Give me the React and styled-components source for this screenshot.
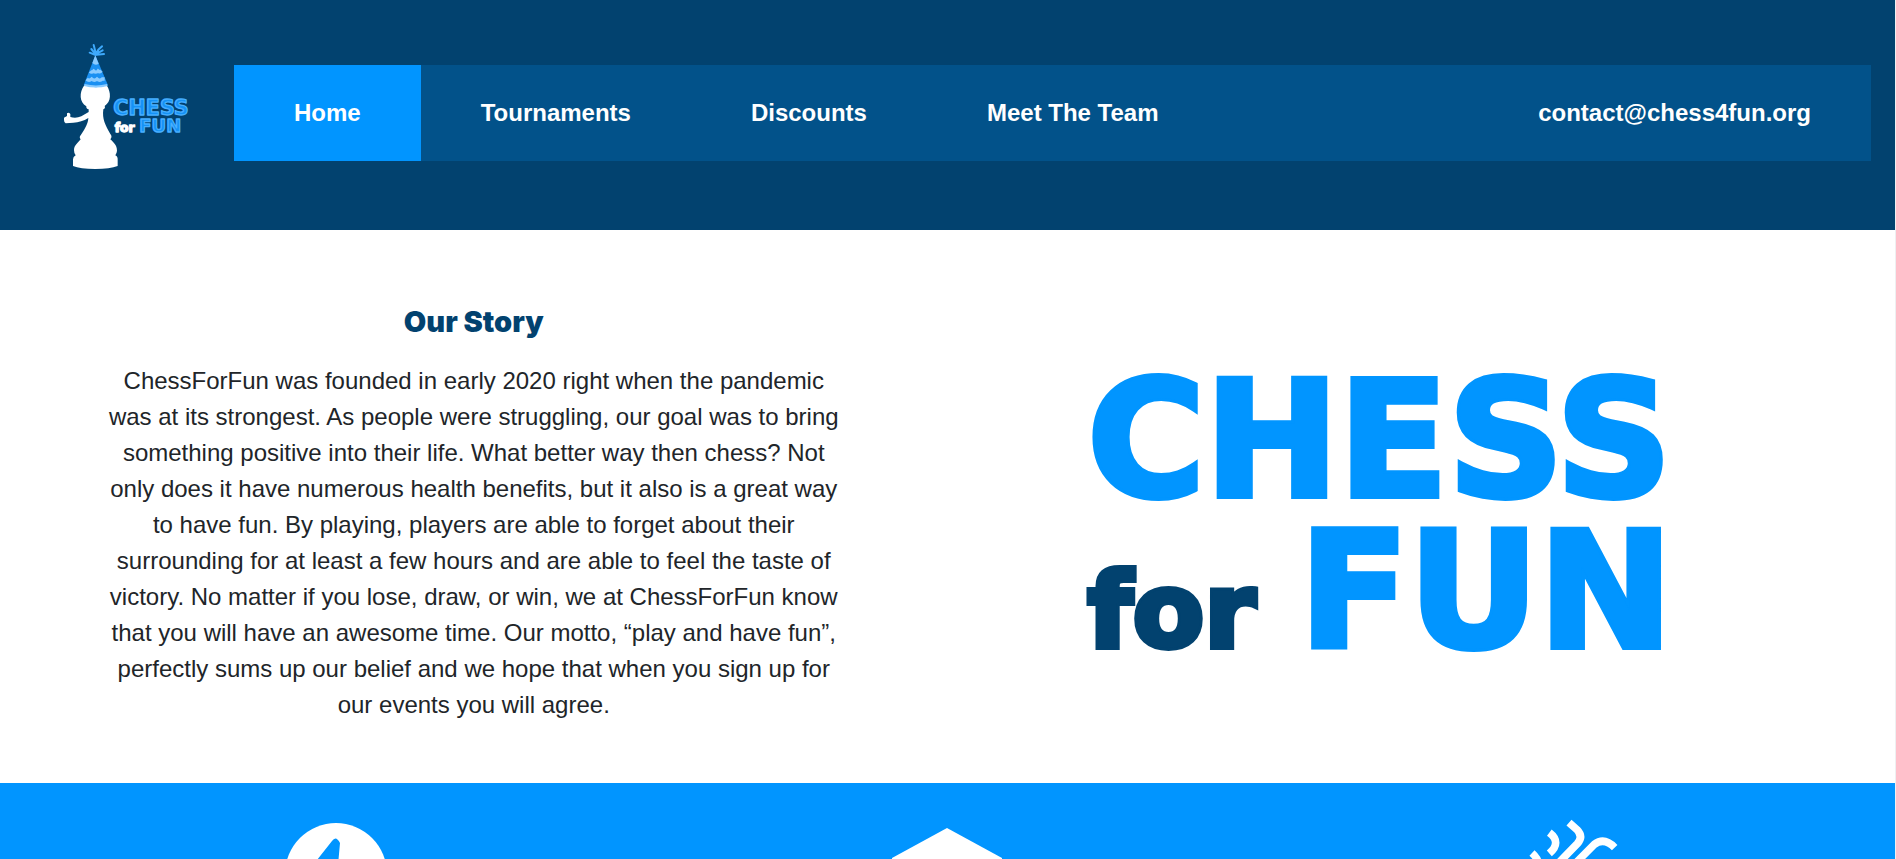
import React from "react";
import styled, { createGlobalStyle } from "styled-components";

const navy = "#02426f";
const blue = "#0195ff";
const wide = '"DejaVu Sans", Verdana, sans-serif';

const Global = createGlobalStyle`
  * { box-sizing: border-box; }
  body {
    margin: 0; overflow-x: hidden; background: #fff; color: #212529;
    font-family: "Liberation Sans", Arial, sans-serif; font-size: 24px; line-height: 36px;
  }
`;
const Page = styled.div`
  border-right: 1px solid #eef0f2;
`;
const Header = styled.header`
  display: flex;
  align-items: flex-start;
  padding: 33px 24px 47px 50px;
  background: ${navy};
`;
const LogoLink = styled.a`
  flex: none;
  width: 184px;
`;
const LogoArt = styled.svg`
  display: block;
  width: 160px;
  height: 150px;
`;
const Nav = styled.nav`
  display: flex;
  flex: 1;
  margin-top: 32px;
  background: #02528a;
`;
const NavLink = styled.a`
  padding: 30px 60px;
  color: #fff;
  font-weight: 700;
  text-decoration: none;
  white-space: nowrap;
  background: ${(p) => (p.$active ? blue : "transparent")};
  margin-left: ${(p) => (p.$end ? "auto" : "0")};
`;
const Story = styled.section`
  display: grid;
  grid-template-columns: 1fr 1fr;
  align-items: center;
  padding: 74px 0 60px;
`;
const StoryText = styled.div`
  padding: 0 100px;
  text-align: center;
`;
const Title = styled.h1`
  margin: 0 0 23px;
  font-family: Inter, sans-serif;
  font-weight: 900;
  font-size: 29px;
  line-height: 36px;
  color: ${navy};
`;
const Body = styled.p`
  margin: 0;
`;
const Wordmark = styled.div`
  padding: 24px 0 0 140px;
  font-family: ${wide};
  font-weight: 700;
  font-size: 160px;
  line-height: 151px;
  color: ${blue};
  white-space: nowrap;
  -webkit-text-stroke: 6px ${blue};
  paint-order: stroke fill;
`;
const WordLine = styled.div`
  display: flex;
  align-items: baseline;
  gap: 44px;
`;
const Small = styled.span`
  font-size: 104px;
  color: ${navy};
  -webkit-text-stroke: 6px ${navy};
`;
const Features = styled.section`
  display: grid;
  grid-template-columns: repeat(3, 1fr);
  justify-items: center;
  padding: 40px 30px;
  background: ${blue};
`;
const FeatureIcon = styled.svg`
  display: block;
  width: 120px;
  height: 120px;
  overflow: visible;
`;

function PawnLogo() {
  return (
    <LogoArt viewBox="0 9 480 450" aria-hidden="true">
      <g fill="#fff">
        <path d="M103 166 H170 C184 188 184 215 164 228 Q167 235 160 238 C156 268 166 285 181 312 Q188 320 181 328 C190 337 201 345 201 362 Q200 371 196 376 Q204 380 203 390 V408 Q180 417 136 417 Q90 417 69 408 V388 Q69 380 77 376 Q72 370 72 361 C72 345 84 339 92 328 Q86 321 93 314 C107 294 114 280 115 264 Q94 277 70 278 L47 280 Q42 278 42 270 V263 L51 258 V250 Q56 246 61 252 V261 Q78 266 94 259 L116 246 V238 Q108 237 109 229 C88 216 87 188 103 166Z" />
      </g>
      <path d="M136 76 L174 166 Q138 177 101 166Z" fill="#1a90f2" />
      <path d="M136 76 L146 101 Q136 108 127 99Z" fill="#8acbff" />
      <g fill="none" stroke="#8acbff" strokeWidth="10">
        <path d="M120 124 Q125 129 131 123 Q138 130 144 123 Q149 128 154 122" />
        <path d="M110 147 Q117 154 125 147 Q133 154 141 147 Q149 154 157 147 L164 147" />
        <path d="M103 165 Q138 174 172 165" strokeWidth="6" />
      </g>
      <g fill="none" stroke="#3ea9fb" strokeWidth="6" strokeLinecap="round">
        <path d="M137 75 L119 68 M137 73 L124 57 M138 72 L131 45 M139 70 Q145 56 156 49 M140 71 L158 61 M140 74 L162 72" />
      </g>
      <g fontFamily="DejaVu Sans" fontWeight="700" strokeLinejoin="round">
        <g fill="#1592f5" stroke="#47aeff" strokeWidth="4">
          <text x="190" y="254" fontSize="62">CHESS</text>
          <text x="268" y="306" fontSize="54">FUN</text>
        </g>
        <text x="194" y="305" fontSize="37" fill="#fff" stroke="#fff" strokeWidth="4">for</text>
      </g>
    </LogoArt>
  );
}

export default function App() {
  return (
    <Page>
      <Global />
      <Header>
        <LogoLink href="#" aria-label="Chess for Fun">
          <PawnLogo />
        </LogoLink>
        <Nav>
          <NavLink href="#" $active>Home</NavLink>
          <NavLink href="#">Tournaments</NavLink>
          <NavLink href="#">Discounts</NavLink>
          <NavLink href="#">Meet The Team</NavLink>
          <NavLink href="mailto:contact@chess4fun.org" $end>contact@chess4fun.org</NavLink>
        </Nav>
      </Header>
      <Story>
        <StoryText>
          <Title>Our Story</Title>
          <Body>
            ChessForFun was founded in early 2020 right when the pandemic was at its strongest. As
            people were struggling, our goal was to bring something positive into their life. What
            better way then chess? Not only does it have numerous health benefits, but it also is a
            great way to have fun. By playing, players are able to forget about their surrounding for
            at least a few hours and are able to feel the taste of victory. No matter if you lose,
            draw, or win, we at ChessForFun know that you will have an awesome time. Our motto, “play
            and have fun”, perfectly sums up our belief and we hope that when you sign up for our
            events you will agree.
          </Body>
        </StoryText>
        <Wordmark>
          <WordLine>CHESS</WordLine>
          <WordLine>
            <Small>for</Small>
            <span>FUN</span>
          </WordLine>
        </Wordmark>
      </Story>
      <Features>
        <FeatureIcon viewBox="0 0 120 120" aria-hidden="true">
          <circle cx="60" cy="51" r="51" fill="#fff" />
          <path d="M56 18 Q60 12 64 20 L62 42 H86 L54 86 L58 56 H26Z" fill={blue} />
        </FeatureIcon>
        <FeatureIcon viewBox="0 0 120 120" aria-hidden="true">
          <path d="M60 5 L115 35 V90 L60 120 L5 90 V35Z" fill="#fff" />
        </FeatureIcon>
        <FeatureIcon viewBox="-3 162 360 360" aria-hidden="true">
          <g fill="none" stroke="#fff" strokeWidth="23">
            <path d="M148 191 Q186 220 148 253" />
            <path d="M207 161 L231 182 Q251 203 232 224 L90 370" />
            <path d="M344 236 Q313 204 283 226 L130 380" />
            <path d="M96 252 Q132 284 100 316" />
          </g>
        </FeatureIcon>
      </Features>
    </Page>
  );
}
